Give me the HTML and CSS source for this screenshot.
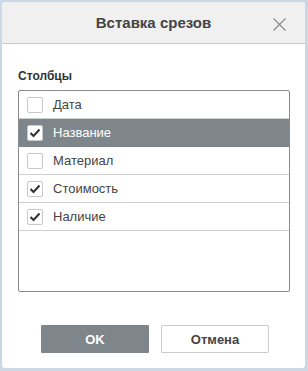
FILE: index.html
```html
<!DOCTYPE html>
<html lang="ru">
<head>
    <meta charset="UTF-8">
    <title>Вставка срезов</title>
    <link rel="stylesheet" href="styles.css">
</head>
<body>
    <div class="okno">
        <div class="naglowek">
            <span class="tytul">Вставка срезов</span>
            <span class="zamknij">
                <svg width="13" height="13" viewBox="0 0 13 13">
                    <path d="M0.5 0.5 L12.5 12.5 M12.5 0.5 L0.5 12.5" stroke="#888" stroke-width="1.1" fill="none"/>
                </svg>
            </span>
        </div>
        <div class="tresc">
            <div class="etykieta">Столбцы</div>
            <div class="lista">
                <div class="wiersz">
                    <span class="pole"></span>Дата
                </div>
                <div class="wiersz zaznaczony">
                    <span class="pole">
                        <svg width="12" height="10" viewBox="0 0 12 10"><path d="M1.5 5 L4.5 8 L10.5 1.5" stroke="#333" stroke-width="2" fill="none"/></svg>
                    </span>Название
                </div>
                <div class="wiersz">
                    <span class="pole"></span>Материал
                </div>
                <div class="wiersz">
                    <span class="pole">
                        <svg width="12" height="10" viewBox="0 0 12 10"><path d="M1.5 5 L4.5 8 L10.5 1.5" stroke="#333" stroke-width="2" fill="none"/></svg>
                    </span>Стоимость
                </div>
                <div class="wiersz">
                    <span class="pole">
                        <svg width="12" height="10" viewBox="0 0 12 10"><path d="M1.5 5 L4.5 8 L10.5 1.5" stroke="#333" stroke-width="2" fill="none"/></svg>
                    </span>Наличие
                </div>
            </div>
        </div>
        <div class="przyciski">
            <button class="przycisk ok">OK</button>
            <button class="przycisk anuluj">Отмена</button>
        </div>
    </div>
</body>
</html>
```

FILE: styles.css
```css
body {
    margin: 0;
    background: #cdd7e3;
    font-family: "Liberation Sans", Arial, sans-serif;
    height: 371px;
    overflow: hidden;
}
.okno {
    margin: 2px 0 0 2px;
    width: 303px;
    height: 366px;
    background: white;
    border-radius: 3px;
    display: flex;
    flex-direction: column;
    overflow: hidden;
}
.naglowek {
    height: 41px;
    background: #f0f0f0;
    border-bottom: 1px solid #cbcbcb;
    display: flex;
    align-items: center;
    justify-content: center;
    position: relative;
}
.tytul {
    font-size: 15px;
    font-weight: bold;
    color: #444;
}
.zamknij {
    position: absolute;
    right: 19px;
    top: 15px;
    height: 13px;
}
.tresc {
    padding: 25px 15px 0 16px;
}
.etykieta {
    font-size: 12px;
    font-weight: bold;
    color: #333;
    margin-bottom: 7px;
}
.lista {
    height: 200px;
    border: 1px solid #8a8a8a;
    border-radius: 2px;
}
.wiersz {
    height: 27px;
    border-bottom: 1px solid #cfcfcf;
    display: flex;
    align-items: center;
    font-size: 13px;
    color: #444;
}
.zaznaczony {
    background: #7e868c;
    color: white;
    border-bottom-color: #7e868c;
}
.pole {
    width: 14px;
    height: 14px;
    border: 1px solid #c8c8c8;
    border-radius: 2px;
    background: white;
    margin: 0 10px 0 8px;
    display: flex;
    align-items: center;
    justify-content: center;
}
.przyciski {
    display: flex;
    justify-content: center;
    gap: 12px;
    margin-top: 33px;
    padding-left: 3px;
}
.przycisk {
    width: 108px;
    height: 28px;
    font-family: "Liberation Sans", Arial, sans-serif;
    font-size: 13px;
    font-weight: bold;
    border-radius: 1px;
}
.ok {
    background: #7e868c;
    border: none;
    color: white;
}
.anuluj {
    background: white;
    border: 1px solid #cbcbcb;
    color: #444;
}
```
